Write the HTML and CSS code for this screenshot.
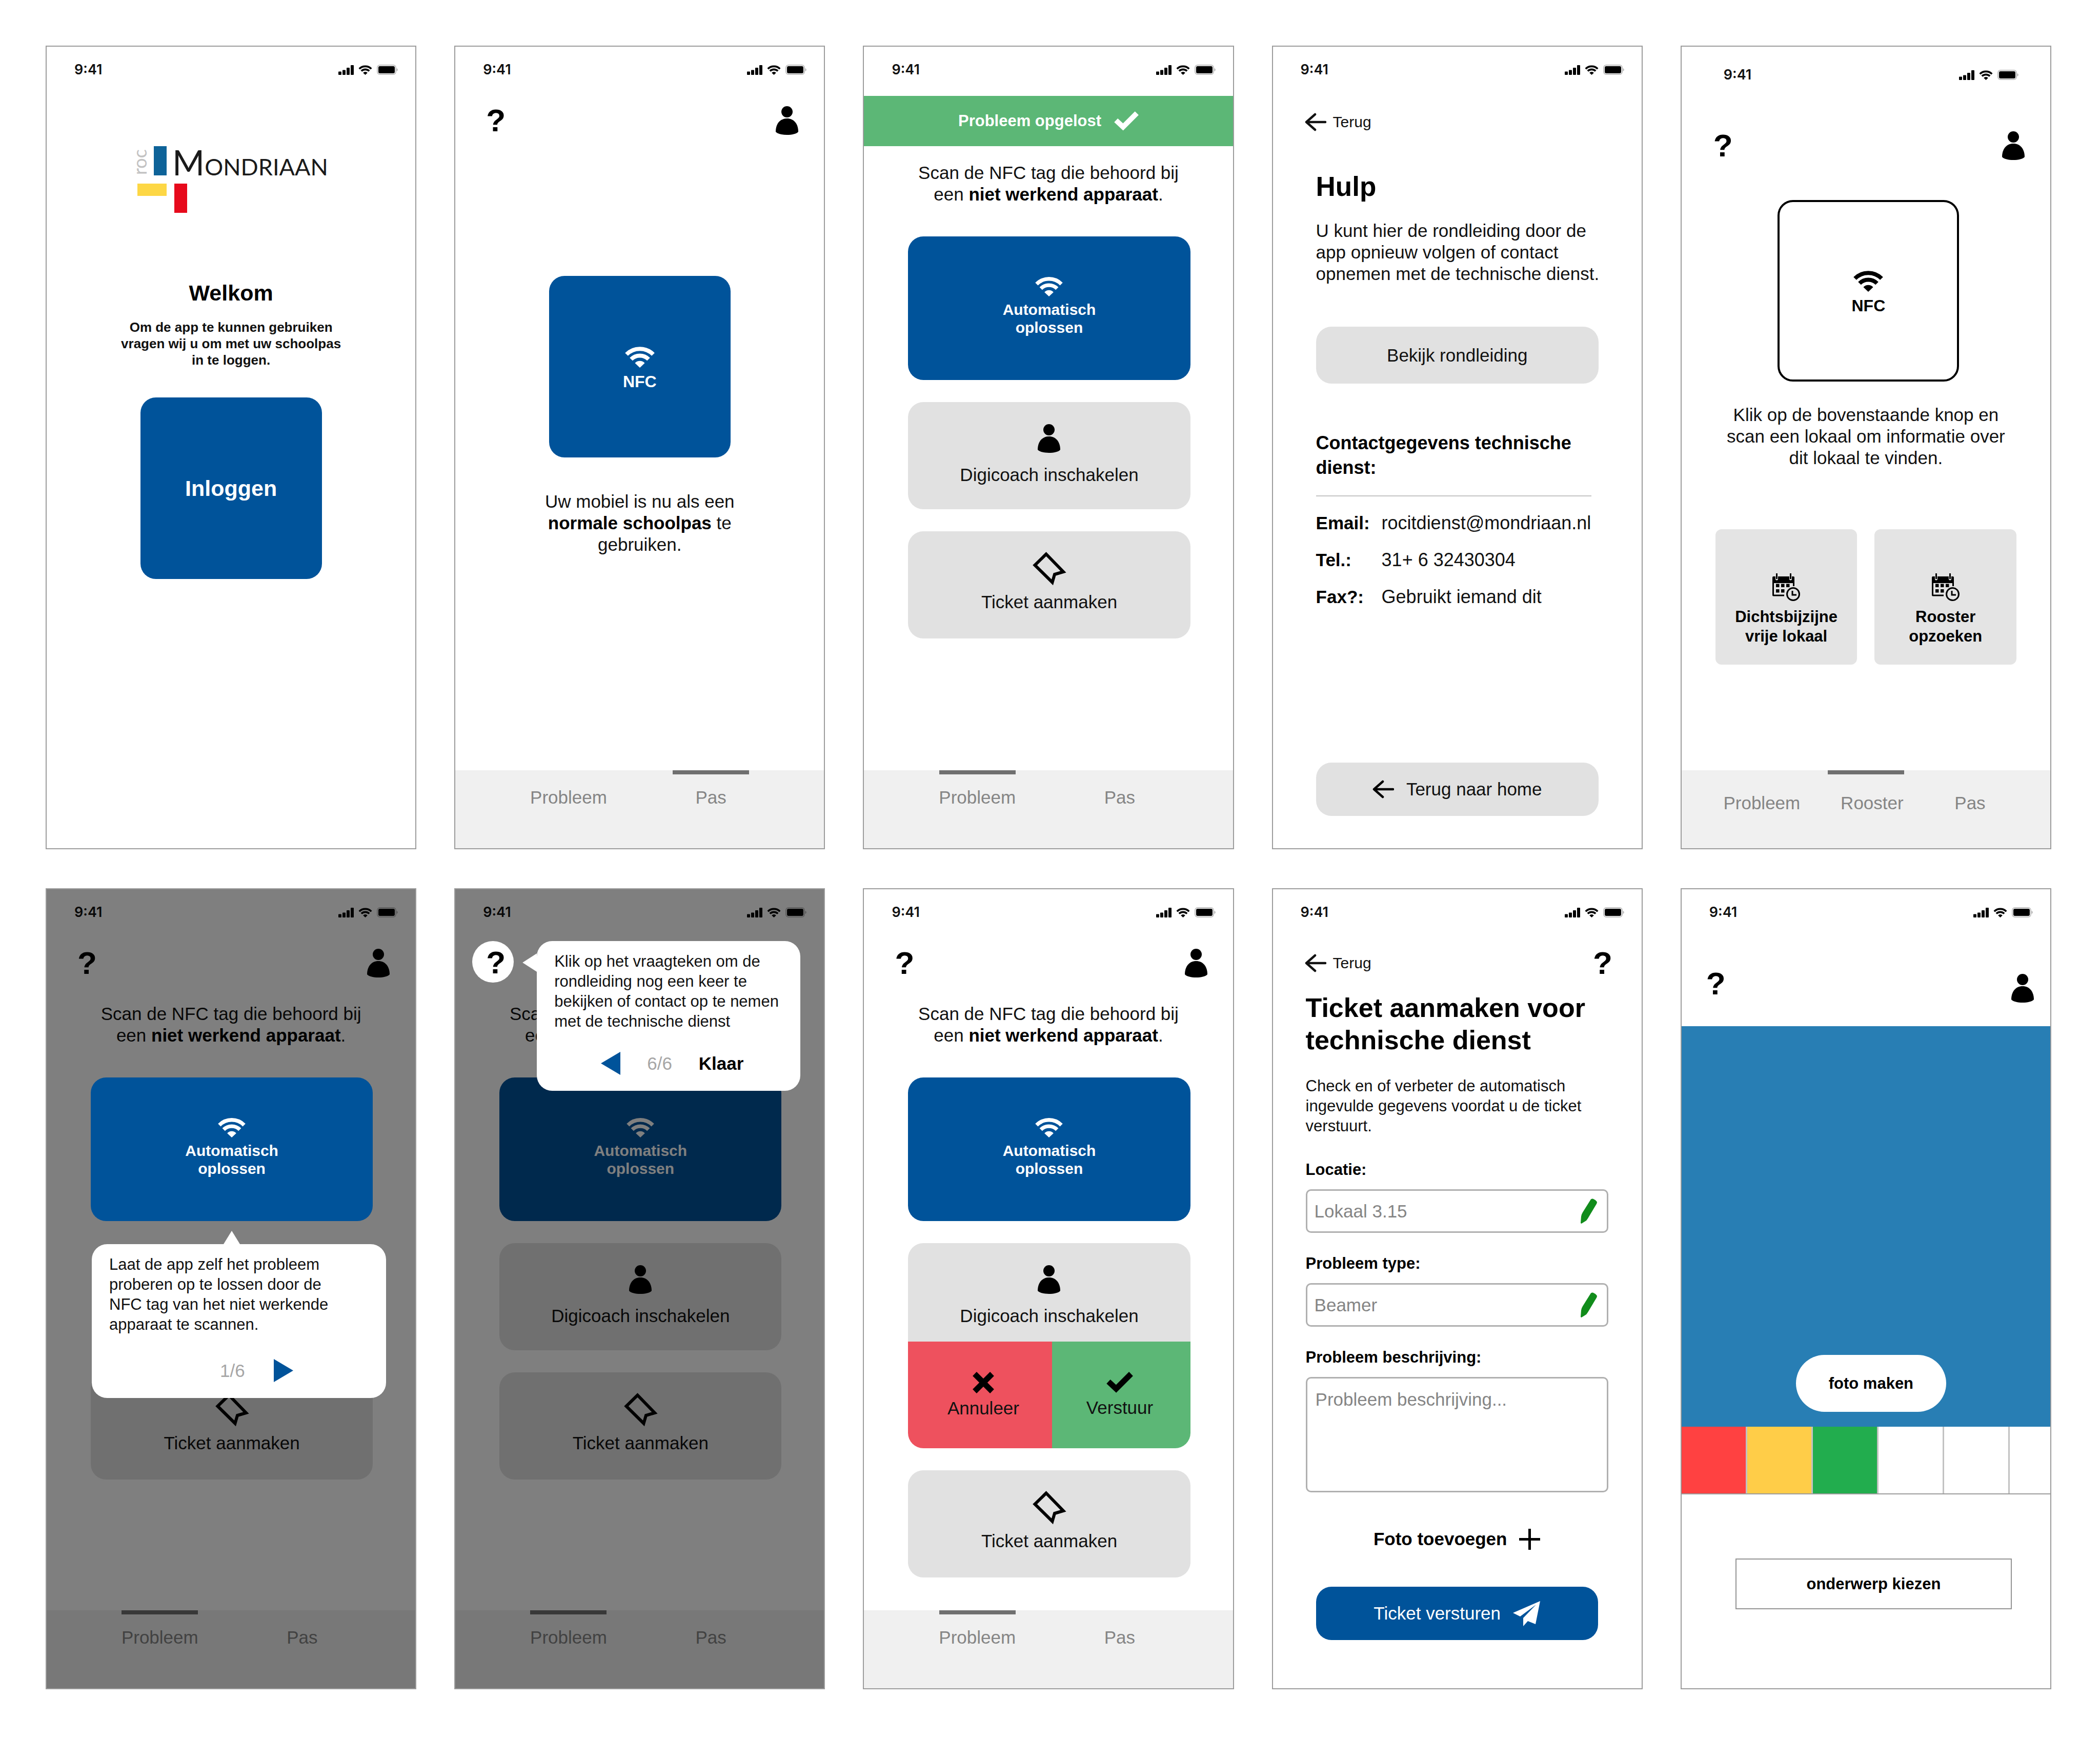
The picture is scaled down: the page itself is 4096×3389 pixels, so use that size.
FILE: index.html
```html
<!DOCTYPE html>
<html lang="nl">
<head>
<meta charset="utf-8">
<meta name="viewport" content="width=device-width, initial-scale=1">
<title>ROC Mondriaan app</title>
<link rel="stylesheet" href="styles.css">
</head>
<body>
<svg class="sprite" aria-hidden="true">
  <symbol id="i-signal" viewBox="0 0 30 19"><path d="M0 13.500a1 1 0 0 1 1-1h4a1 1 0 0 1 1 1v4.500a1 1 0 0 1-1 1H1a1 1 0 0 1-1-1zM8 10.500a1 1 0 0 1 1-1h4a1 1 0 0 1 1 1V18a1 1 0 0 1-1 1H9a1 1 0 0 1-1-1zM16 6a1 1 0 0 1 1-1h4a1 1 0 0 1 1 1v12a1 1 0 0 1-1 1h-4a1 1 0 0 1-1-1zM24 1a1 1 0 0 1 1-1h4a1 1 0 0 1 1 1v17a1 1 0 0 1-1 1h-4a1 1 0 0 1-1-1z"/></symbol>
  <symbol id="i-wifi" viewBox="0 0 58 42"><path fill="none" stroke="currentColor" stroke-width="8" d="M3 16A36.700 36.700 0 0 1 55 16M12 25.500A24 24 0 0 1 46 25.500"/><path d="M29 42L19.500 33A13 13 0 0 1 38.500 33Z"/></symbol>
  <symbol id="i-battery" viewBox="0 0 41 20"><rect x="1" y="1" width="36" height="18" rx="5" fill="none" stroke="#000" stroke-opacity=".25" stroke-width="2"/><rect x="3" y="3" width="32" height="14" rx="3"/><path d="M38.500 7c3 1 3 5 0 6z" fill-opacity=".3"/></symbol>
  <symbol id="i-person" viewBox="0 0 44 56"><circle cx="22" cy="11" r="11"/><path d="M0 50C0 34 9 24 22 24s22 10 22 26c-7 8-37 8-44 0z"/></symbol>
  <symbol id="i-ticket" viewBox="0 0 68 68"><path fill="none" stroke="currentColor" stroke-width="6" d="M28.500 4.500L6.500 26L40.500 59.500L45 44L62 39Z"/></symbol>
  <symbol id="i-check" viewBox="0 0 52 41"><path fill="none" stroke="currentColor" stroke-width="11" d="M4 19L19 33L48 4"/></symbol>
  <symbol id="i-cross" viewBox="0 0 42 42"><path fill="none" stroke="currentColor" stroke-width="11" d="M4 4L38 38M38 4L4 38"/></symbol>
  <symbol id="i-back" viewBox="0 0 42 36"><path fill="none" stroke="currentColor" stroke-width="4.500" stroke-linecap="round" stroke-linejoin="round" d="M20 3L3 18L20 33M3 18H40"/></symbol>
  <symbol id="i-calendar" viewBox="0 0 56 54"><path d="M2 6h5v5a2.500 2.500 0 0 0 5 0V6h22v5a2.500 2.500 0 0 0 5 0V6h3a2 2 0 0 1 2 2v17h-3v-6H4v22.500h20v3H3a2 2 0 0 1-2-2V8z"/><path d="M8 0h3v11H8zM35 0h3v11h-3zM8 20.500h6.500V27H8zM18 20.500h6.500V27H18zM28 20.500h6.500V27H28zM8 31h6.500v6.500H8zM18 31h6.500v6.500H18z"/><circle cx="41.500" cy="40.500" r="12" fill="none" stroke="currentColor" stroke-width="3"/><path fill="none" stroke="currentColor" stroke-width="3" d="M40 34v8h8"/></symbol>
  <symbol id="i-pencil" viewBox="0 0 32 49"><path d="M20 1.500Q22 0 24 .500Q29 2.500 31.500 6Q32.500 8 31 10.500L14 39Q12 43 8 45L1.500 49L0 48L1 35Q1.500 31 4 27Z"/></symbol>
  <symbol id="i-plus" viewBox="0 0 41 41"><path fill="none" stroke="currentColor" stroke-width="5" d="M20.500 0V41M0 20.500H41"/></symbol>
  <symbol id="i-plane" viewBox="0 0 53 49"><path d="M53 0L0 23L14 30L45 7L20 33V49L29 39L44 45Z"/></symbol>
  <symbol id="i-next" viewBox="0 0 38 45"><path d="M0 0L38 22.500L0 45Z"/></symbol>
  <symbol id="i-prev" viewBox="0 0 38 45"><path d="M38 0L0 22.500L38 45Z"/></symbol>
</svg>

<main class="board">

  <section class="phone">
    <div class="status"><span>9:41</span><span class="status__icons"><svg class="ic-signal"><use href="#i-signal"/></svg><svg class="ic-swifi"><use href="#i-wifi"/></svg><svg class="ic-battery"><use href="#i-battery"/></svg></span></div>
    <div class="welcome">
      <svg class="logo" viewBox="0 0 366 134">
        <rect x="32" y="4" width="25" height="57" fill="#0e6399"/>
        <rect x="0" y="77" width="57" height="24" fill="#fdd745"/>
        <rect x="72" y="77" width="25" height="57" fill="#e70a1c"/>
        <text class="logo__roc" transform="rotate(-90)" x="-60" y="18">roc</text>
        <text class="logo__name" x="68" y="61">M<tspan class="logo__caps">ONDRIAAN</tspan></text>
      </svg>
      <h1 class="welcome__title">Welkom</h1>
      <p class="welcome__text">Om de app te kunnen gebruiken<br>vragen wij u om met uw schoolpas<br>in te loggen.</p>
      <button class="square square--login" type="button">Inloggen</button>
    </div>
  </section>

  <section class="phone">
    <div class="status"><span>9:41</span><span class="status__icons"><svg class="ic-signal"><use href="#i-signal"/></svg><svg class="ic-swifi"><use href="#i-wifi"/></svg><svg class="ic-battery"><use href="#i-battery"/></svg></span></div>
    <header class="top"><button class="help" type="button">?</button><button class="plain" type="button" aria-label="Profiel"><svg class="ic-person"><use href="#i-person"/></svg></button></header>
    <div class="pass">
      <button class="square" type="button"><svg class="ic-wifi"><use href="#i-wifi"/></svg>NFC</button>
      <p class="pass__text">Uw mobiel is nu als een<br><b>normale schoolpas</b> te<br>gebruiken.</p>
    </div>
    <nav class="tabs"><a class="tab" href="#">Probleem</a><a class="tab tab--on" href="#">Pas</a></nav>
  </section>

  <section class="phone">
    <div class="status"><span>9:41</span><span class="status__icons"><svg class="ic-signal"><use href="#i-signal"/></svg><svg class="ic-swifi"><use href="#i-wifi"/></svg><svg class="ic-battery"><use href="#i-battery"/></svg></span></div>
    <div class="banner">Probleem opgelost<svg class="ic-check"><use href="#i-check"/></svg></div>
    <p class="scan scan--banner">Scan de NFC tag die behoord bij<br>een <b>niet werkend apparaat</b>.</p>
    <div class="cards">
      <button class="card card--auto" type="button"><svg class="ic-wifi-s"><use href="#i-wifi"/></svg>Automatisch<br>oplossen</button>
      <button class="card card--coach" type="button"><svg class="ic-person"><use href="#i-person"/></svg>Digicoach inschakelen</button>
      <button class="card card--ticket" type="button"><svg class="ic-ticket"><use href="#i-ticket"/></svg>Ticket aanmaken</button>
    </div>
    <nav class="tabs"><a class="tab tab--on" href="#">Probleem</a><a class="tab" href="#">Pas</a></nav>
  </section>

  <section class="phone">
    <div class="status"><span>9:41</span><span class="status__icons"><svg class="ic-signal"><use href="#i-signal"/></svg><svg class="ic-swifi"><use href="#i-wifi"/></svg><svg class="ic-battery"><use href="#i-battery"/></svg></span></div>
    <header class="top top--back"><a class="back" href="#"><svg class="ic-back"><use href="#i-back"/></svg>Terug</a></header>
    <div class="info">
      <h1 class="info__title">Hulp</h1>
      <p class="info__text">U kunt hier de rondleiding door de<br>app opnieuw volgen of contact<br>opnemen met de technische dienst.</p>
      <button class="wide wide--tour" type="button">Bekijk rondleiding</button>
      <h2 class="info__sub">Contactgegevens technische dienst:</h2>
      <dl class="contact">
        <dt>Email:</dt><dd>rocitdienst@mondriaan.nl</dd>
        <dt>Tel.:</dt><dd>31+ 6 32430304</dd>
        <dt>Fax?:</dt><dd>Gebruikt iemand dit</dd>
      </dl>
      <button class="wide wide--home" type="button"><svg class="ic-back"><use href="#i-back"/></svg>Terug naar home</button>
    </div>
  </section>

  <section class="phone">
    <div class="status status--inset"><span>9:41</span><span class="status__icons"><svg class="ic-signal"><use href="#i-signal"/></svg><svg class="ic-swifi"><use href="#i-wifi"/></svg><svg class="ic-battery"><use href="#i-battery"/></svg></span></div>
    <header class="top top--low"><button class="help" type="button">?</button><button class="plain" type="button" aria-label="Profiel"><svg class="ic-person"><use href="#i-person"/></svg></button></header>
    <div class="rooms">
      <button class="square square--line" type="button"><svg class="ic-wifi"><use href="#i-wifi"/></svg>NFC</button>
      <p class="rooms__text">Klik op de bovenstaande knop en<br>scan een lokaal om informatie over<br>dit lokaal te vinden.</p>
      <div class="tiles">
        <button class="tile" type="button"><svg class="ic-calendar"><use href="#i-calendar"/></svg>Dichtsbijzijne<br>vrije lokaal</button>
        <button class="tile" type="button"><svg class="ic-calendar"><use href="#i-calendar"/></svg>Rooster<br>opzoeken</button>
      </div>
    </div>
    <nav class="tabs tabs--three"><a class="tab" href="#">Probleem</a><a class="tab tab--on" href="#"><span class="tab__wide">Rooster</span></a><a class="tab" href="#">Pas</a></nav>
  </section>

  <section class="phone phone--dim">
    <div class="status"><span>9:41</span><span class="status__icons"><svg class="ic-signal"><use href="#i-signal"/></svg><svg class="ic-swifi"><use href="#i-wifi"/></svg><svg class="ic-battery"><use href="#i-battery"/></svg></span></div>
    <header class="top"><button class="help" type="button">?</button><button class="plain" type="button" aria-label="Profiel"><svg class="ic-person"><use href="#i-person"/></svg></button></header>
    <p class="scan">Scan de NFC tag die behoord bij<br>een <b>niet werkend apparaat</b>.</p>
    <div class="cards cards--tour">
      <div class="spot">
        <button class="card card--auto" type="button"><svg class="ic-wifi-s"><use href="#i-wifi"/></svg>Automatisch<br>oplossen</button>
        <div class="tip tip--below">
          <p>Laat de app zelf het probleem<br>proberen op te lossen door de<br>NFC tag van het niet werkende<br>apparaat te scannen.</p>
          <div class="tip__nav"><span class="tip__count">1/6</span><button class="plain" type="button" aria-label="Volgende"><svg class="ic-step"><use href="#i-next"/></svg></button></div>
        </div>
      </div>
      <button class="card card--ticket" type="button"><svg class="ic-ticket"><use href="#i-ticket"/></svg>Ticket aanmaken</button>
    </div>
    <nav class="tabs"><a class="tab tab--on" href="#">Probleem</a><a class="tab" href="#">Pas</a></nav>
  </section>

  <section class="phone phone--dim">
    <div class="status"><span>9:41</span><span class="status__icons"><svg class="ic-signal"><use href="#i-signal"/></svg><svg class="ic-swifi"><use href="#i-wifi"/></svg><svg class="ic-battery"><use href="#i-battery"/></svg></span></div>
    <header class="top">
      <div class="spot">
        <button class="help help--spot" type="button">?</button>
        <div class="tip tip--beside">
          <p>Klik op het vraagteken om de<br>rondleiding nog een keer te<br>bekijken of contact op te nemen<br>met de technische dienst</p>
          <div class="tip__nav"><button class="plain" type="button" aria-label="Vorige"><svg class="ic-step"><use href="#i-prev"/></svg></button><span class="tip__count">6/6</span><button class="plain tip__done" type="button">Klaar</button></div>
        </div>
      </div>
    </header>
    <p class="scan">Scan de NFC tag die behoord bij<br>een <b>niet werkend apparaat</b>.</p>
    <div class="cards">
      <button class="card card--auto" type="button"><svg class="ic-wifi-s"><use href="#i-wifi"/></svg>Automatisch<br>oplossen</button>
      <button class="card card--coach" type="button"><svg class="ic-person"><use href="#i-person"/></svg>Digicoach inschakelen</button>
      <button class="card card--ticket" type="button"><svg class="ic-ticket"><use href="#i-ticket"/></svg>Ticket aanmaken</button>
    </div>
    <nav class="tabs"><a class="tab tab--on" href="#">Probleem</a><a class="tab" href="#">Pas</a></nav>
  </section>

  <section class="phone">
    <div class="status"><span>9:41</span><span class="status__icons"><svg class="ic-signal"><use href="#i-signal"/></svg><svg class="ic-swifi"><use href="#i-wifi"/></svg><svg class="ic-battery"><use href="#i-battery"/></svg></span></div>
    <header class="top"><button class="help" type="button">?</button><button class="plain" type="button" aria-label="Profiel"><svg class="ic-person"><use href="#i-person"/></svg></button></header>
    <p class="scan">Scan de NFC tag die behoord bij<br>een <b>niet werkend apparaat</b>.</p>
    <div class="cards">
      <button class="card card--auto" type="button"><svg class="ic-wifi-s"><use href="#i-wifi"/></svg>Automatisch<br>oplossen</button>
      <div class="confirm">
        <div class="card card--coach card--open"><svg class="ic-person"><use href="#i-person"/></svg>Digicoach inschakelen</div>
        <div class="confirm__row">
          <button class="choice choice--no" type="button"><svg class="ic-cross"><use href="#i-cross"/></svg>Annuleer</button>
          <button class="choice choice--yes" type="button"><svg class="ic-check-l"><use href="#i-check"/></svg>Verstuur</button>
        </div>
      </div>
      <button class="card card--ticket" type="button"><svg class="ic-ticket"><use href="#i-ticket"/></svg>Ticket aanmaken</button>
    </div>
    <nav class="tabs"><a class="tab tab--on" href="#">Probleem</a><a class="tab" href="#">Pas</a></nav>
  </section>

  <section class="phone">
    <div class="status"><span>9:41</span><span class="status__icons"><svg class="ic-signal"><use href="#i-signal"/></svg><svg class="ic-swifi"><use href="#i-wifi"/></svg><svg class="ic-battery"><use href="#i-battery"/></svg></span></div>
    <header class="top top--form"><a class="back" href="#"><svg class="ic-back"><use href="#i-back"/></svg>Terug</a><button class="help" type="button">?</button></header>
    <form class="form">
      <h1 class="form__title">Ticket aanmaken voor<br>technische dienst</h1>
      <p class="form__text">Check en of verbeter de automatisch<br>ingevulde gegevens voordat u de ticket<br>verstuurt.</p>
      <label class="form__label" for="loc">Locatie:</label>
      <div class="field"><input id="loc" type="text" value="Lokaal 3.15"><svg class="ic-pencil"><use href="#i-pencil"/></svg></div>
      <label class="form__label" for="type">Probleem type:</label>
      <div class="field"><input id="type" type="text" value="Beamer"><svg class="ic-pencil"><use href="#i-pencil"/></svg></div>
      <label class="form__label" for="desc">Probleem beschrijving:</label>
      <textarea class="area" id="desc" placeholder="Probleem beschrijving..."></textarea>
      <button class="plain form__photo" type="button">Foto toevoegen<svg class="ic-plus"><use href="#i-plus"/></svg></button>
      <button class="wide wide--send" type="button">Ticket versturen<svg class="ic-plane"><use href="#i-plane"/></svg></button>
    </form>
  </section>

  <section class="phone">
    <div class="status"><span>9:41</span><span class="status__icons"><svg class="ic-signal"><use href="#i-signal"/></svg><svg class="ic-swifi"><use href="#i-wifi"/></svg><svg class="ic-battery"><use href="#i-battery"/></svg></span></div>
    <header class="top top--camera"><button class="help" type="button">?</button><button class="plain top__low" type="button" aria-label="Profiel"><svg class="ic-person"><use href="#i-person"/></svg></button></header>
    <div class="camera"><button class="shutter" type="button">foto maken</button></div>
    <div class="swatches"><span class="sw sw--red"></span><span class="sw sw--yellow"></span><span class="sw sw--green"></span><span class="sw"></span><span class="sw"></span><span class="sw"></span></div>
    <button class="subject" type="button">onderwerp kiezen</button>
  </section>

</main>
</body>
</html>
```
FILE: styles.css
```css
:root {
  --blue: #00539a;
  --green: #5cb776;
  --red: #ee515e;
  --grey: #e1e1e1;
  --line: #9c9c9c;
  --radius: 30px;
}

* { box-sizing: border-box; }

body {
  margin: 0;
  background: #fff;
  color: #111;
  font: 35px/42px "Liberation Sans", Arial, sans-serif;
}

h1, h2, p, dl, dd { margin: 0; }
svg { display: block; flex: none; fill: currentColor; }
b, dt { color: #000; }

button, input, textarea {
  margin: 0;
  padding: 0;
  border: 0;
  background: none;
  color: inherit;
  font: inherit;
}

a { color: inherit; text-decoration: none; }

.sprite { position: absolute; width: 0; height: 0; }

/* icon sizes */
.ic-signal { width: 30px; height: 19px; }
.ic-swifi { width: 27px; height: 19px; }
.ic-battery { width: 41px; height: 20px; }
.ic-person { width: 44px; height: 56px; }
.ic-wifi { width: 58px; height: 42px; }
.ic-wifi-s { width: 54px; height: 39px; }
.ic-ticket { width: 68px; height: 68px; }
.ic-check { width: 48px; height: 38px; }
.ic-check-l { width: 52px; height: 41px; }
.ic-cross { width: 42px; height: 42px; }
.ic-back { width: 42px; height: 36px; }
.ic-calendar { width: 56px; height: 54px; }
.ic-pencil { width: 32px; height: 49px; color: #118c1b; }
.ic-plus { width: 41px; height: 41px; }
.ic-plane { width: 53px; height: 49px; }
.ic-step { width: 38px; height: 45px; color: var(--blue); }

.board {
  display: grid;
  grid-template-columns: repeat(5, minmax(0, 1fr));
  grid-template-rows: minmax(1567px, auto) minmax(1562px, auto);
  gap: 76px 74px;
  padding: 89px 95px 95px 89px;
}

.phone {
  position: relative;
  display: flex;
  flex-direction: column;
  border: 2px solid var(--line);
  background: #fff;
}

.phone--dim::after {
  content: "";
  position: absolute;
  inset: 0;
  background: rgba(0, 0, 0, .5);
}

/* status bar */
.status {
  display: flex;
  align-items: center;
  justify-content: space-between;
  height: 90px;
  margin-bottom: 6px;
  padding: 0 34px 0 54px;
  font: 600 27px/32px Inter, "Liberation Sans", sans-serif;
}
.status__icons { display: flex; align-items: center; gap: 9px; color: #000; }
.status--inset { height: 110px; margin-bottom: 0; padding: 0 62px 0 82px; }

/* header */
.top {
  display: flex;
  align-items: center;
  justify-content: space-between;
  height: 76px;
  padding: 20px 50px 0 60px;
}
.top--low { height: 111px; padding: 55px 50px 0 62px; }
.top--back { height: 80px; padding: 22px 50px 0 62px; }
.top--form { padding: 20px 57px 0 62px; }
.top--camera { align-items: flex-start; height: 171px; padding: 60px 32px 0 48px; }
.top__low { padding-top: 9px; }

.plain { display: flex; align-items: center; color: #000; }
.help { color: #000; font-size: 62px; font-weight: 700; line-height: 56px; }
.back { display: flex; align-items: center; gap: 13px; font-size: 30px; line-height: 36px; }

/* big square buttons */
.square {
  display: flex;
  flex-direction: column;
  align-items: center;
  justify-content: center;
  gap: 8px;
  width: 354px;
  height: 354px;
  padding-top: 8px;
  border-radius: var(--radius);
  background: var(--blue);
  color: #fff;
  font-size: 32px;
  font-weight: 700;
  line-height: 38px;
}
.square--login { padding-top: 0; font-size: 43px; }
.square--line { margin-left: 10px; border: 4px solid #000; background: #fff; color: #000; }

/* welcome */
.welcome { display: flex; flex-direction: column; align-items: center; padding-top: 94px; text-align: center; }
.logo { width: 366px; height: 134px; overflow: visible; }
.logo__roc { fill: #c2c2c2; font: 400 36px Lato, sans-serif; }
.logo__name { fill: #1a1a1a; font: 400 68px Lato, sans-serif; }
.logo__caps { font-size: 45px; }
.welcome__title { margin: 131px 0 26px; color: #000; font-size: 43px; line-height: 50px; }
.welcome__text { margin-bottom: 57px; font-size: 26px; font-weight: 700; line-height: 32px; }

/* pass */
.pass { display: flex; flex-direction: column; align-items: center; gap: 65px; padding-top: 275px; text-align: center; }

/* bottom tabs */
.tabs {
  display: grid;
  grid-template-columns: repeat(2, 1fr);
  height: 152px;
  margin-top: auto;
  padding: 0 82px;
  background: #f0f0f0;
  color: #858585;
}
.tab { display: flex; flex-direction: column; align-items: center; gap: 24px; }
.tab::before { content: ""; width: 149px; height: 8px; }
.tab--on::before { background: #707070; }
.tabs--three { grid-template-columns: repeat(3, 1fr); padding: 0 55px; }
.tabs--three .tab { gap: 35px; }
.tab__wide { padding-left: 24px; }

/* problem screens */
.banner {
  display: flex;
  align-items: center;
  justify-content: center;
  gap: 25px;
  height: 98px;
  background: var(--green);
  color: #fff;
  font-size: 31px;
  font-weight: 700;
}
.scan { margin-top: 50px; text-align: center; }
.scan--banner { margin-top: 31px; }
.cards { display: flex; flex-direction: column; gap: 43px; padding: 61px 83px 0 86px; }
.cards--tour { gap: 295px; }

.card {
  display: flex;
  flex-direction: column;
  align-items: center;
  width: 100%;
  height: 209px;
  border-radius: var(--radius);
  background: var(--grey);
  color: #111;
}
.card svg { color: #000; }
.card--auto {
  height: 280px;
  padding-top: 78px;
  background: var(--blue);
  color: #fff;
  font-size: 30px;
  font-weight: 700;
  line-height: 35px;
}
.card--auto svg { margin-bottom: 8px; color: #fff; }
.card--coach { gap: 22px; padding-top: 43px; }
.card--ticket { gap: 9px; padding-top: 40px; }
.card--open { height: 192px; border-radius: 0; }

.confirm { overflow: hidden; border-radius: var(--radius); }
.confirm__row { display: grid; grid-template-columns: 281fr 269fr; height: 208px; }
.choice { display: flex; flex-direction: column; align-items: center; gap: 8px; padding-top: 59px; }
.choice--no { padding-left: 12px; background: var(--red); }
.choice--yes { padding-right: 6px; background: var(--green); }
.choice svg { color: #000; }

/* guided tour */
.spot { position: relative; z-index: 1; }
.help--spot { position: relative; }
.help--spot::before {
  content: "";
  position: absolute;
  z-index: -1;
  left: 50%;
  top: 50%;
  width: 81px;
  height: 81px;
  margin: -42px 0 0 -46px;
  border-radius: 50%;
  background: #fff;
}
.tip {
  position: absolute;
  padding: 20px 34px 31px;
  border-radius: var(--radius);
  background: #fff;
  font-size: 31px;
  line-height: 39px;
}
.tip::before { content: ""; position: absolute; background: #fff; }
.tip--below { top: 325px; left: 2px; width: 574px; }
.tip--below::before {
  left: 257px;
  bottom: 100%;
  width: 32px;
  height: 26px;
  clip-path: polygon(50% 0, 100% 100%, 0 100%);
}
.tip--beside { top: -14px; left: 99px; width: 514px; }
.tip--beside::before {
  right: 100%;
  top: 24px;
  width: 28px;
  height: 36px;
  clip-path: polygon(0 50%, 100% 0, 100% 100%);
}
.tip__nav { display: flex; align-items: center; font-size: 35px; }
.tip--below .tip__nav { gap: 56px; margin-top: 48px; padding-left: 216px; }
.tip--beside .tip__nav { gap: 52px; margin-top: 40px; padding-left: 91px; }
.tip__count { color: #a6a6a6; }
.tip__done { font-weight: 700; }

/* help screen */
.info { display: flex; flex: 1; flex-direction: column; padding: 65px 84px 63px; }
.info__title { margin-bottom: 34px; color: #000; font-size: 53px; line-height: 63px; }
.info__text { white-space: nowrap; }
.info__sub { margin-bottom: 30px; color: #000; font-size: 36px; line-height: 48px; }
.contact {
  display: grid;
  grid-template-columns: 128px 1fr;
  margin-right: 14px;
  padding-top: 16px;
  border-top: 2px solid #c4c4c4;
  font-size: 36px;
  line-height: 72px;
  white-space: nowrap;
}
.contact dt { font-size: 35px; font-weight: 700; }

.wide {
  display: flex;
  align-items: center;
  justify-content: center;
  gap: 24px;
  height: 104px;
  border-radius: var(--radius);
  background: var(--grey);
}
.wide svg { color: #000; }
.wide--tour { height: 111px; margin: 82px 0 92px; }
.wide--home { margin-top: auto; }
.wide--send { margin: 0 20px; background: var(--blue); color: #fff; }
.wide--send svg { color: #fff; }

/* rooms */
.rooms { display: flex; flex-direction: column; align-items: center; padding: 78px 66px 0; text-align: center; }
.rooms__text { margin: 44px 0 118px; white-space: nowrap; }
.tiles { display: grid; grid-template-columns: 1fr 1fr; gap: 34px; width: 100%; }
.tile {
  display: flex;
  flex-direction: column;
  align-items: center;
  height: 264px;
  padding-top: 86px;
  border-radius: 12px;
  background: #e4e4e4;
  color: #000;
  font-size: 31px;
  font-weight: 700;
  line-height: 38px;
}
.tile svg { margin-bottom: 12px; }

/* ticket form */
.form { display: flex; flex-direction: column; padding: 28px 65px 0 64px; }
.form__title { margin-bottom: 38px; color: #000; font-size: 52px; line-height: 63px; white-space: nowrap; }
.form__text { margin-bottom: 6px; font-size: 31px; line-height: 39px; white-space: nowrap; }
.form__label { margin: 40px 0 19px; color: #000; font-size: 31px; font-weight: 700; line-height: 39px; }
.field {
  display: flex;
  align-items: center;
  height: 85px;
  padding: 0 19px 0 14px;
  border: 3px solid #b0b0b0;
  border-radius: 10px;
}
.field input { flex: 1; min-width: 0; color: #858585; }
.area {
  height: 225px;
  padding: 20px 16px;
  border: 3px solid #b0b0b0;
  border-radius: 10px;
  resize: none;
}
.area::placeholder { color: #858585; opacity: 1; }
.form__photo { gap: 24px; align-self: center; margin: 70px 0 72px; font-weight: 700; }

/* photo screen */
.camera {
  display: flex;
  align-items: flex-end;
  justify-content: center;
  height: 781px;
  padding: 0 0 29px 20px;
  background: #287eb4;
}
.shutter {
  width: 293px;
  height: 111px;
  border-radius: 56px;
  background: #fff;
  color: #000;
  font-size: 31px;
  font-weight: 700;
}
.swatches { display: flex; height: 132px; overflow: hidden; border-bottom: 2px solid var(--line); }
.sw { flex: none; width: 128px; border-right: 3px solid #c2c2c2; }
.sw--red { background: #ff4141; }
.sw--yellow { background: #ffcd48; }
.sw--green { background: #22ad4e; }
.subject {
  height: 99px;
  margin: 125px 75px 0 105px;
  border: 2px solid #949494;
  color: #000;
  font-size: 31px;
  font-weight: 700;
}
```
